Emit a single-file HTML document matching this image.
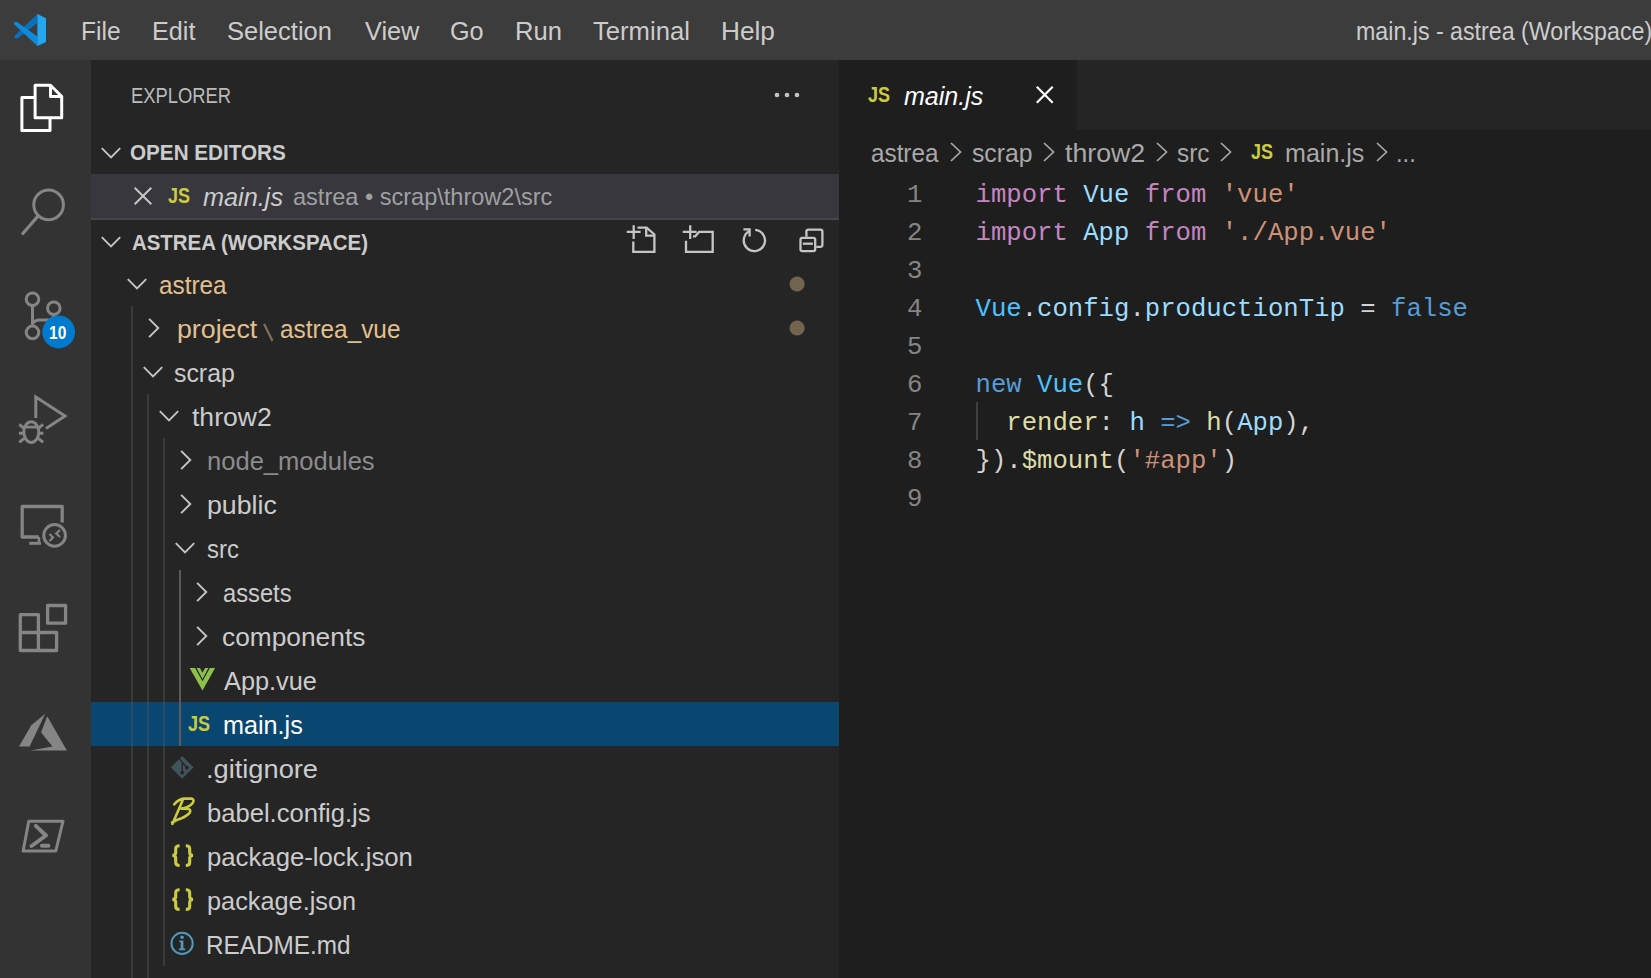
<!DOCTYPE html>
<html><head><meta charset="utf-8"><style>
html,body{margin:0;padding:0;width:1651px;height:978px;overflow:hidden;background:#1e1e1e;}
body>div{position:absolute;}
</style></head><body>
<div style="left:0px;top:0px;width:1651px;height:60px;background:#3c3c3c;"></div>
<div style="left:0px;top:60px;width:91px;height:918px;background:#333333;"></div>
<div style="left:91px;top:60px;width:748px;height:918px;background:#252526;"></div>
<div style="left:839px;top:60px;width:812px;height:918px;background:#1e1e1e;"></div>
<div style="left:839px;top:60px;width:812px;height:70px;background:#252526;"></div>
<div style="left:839px;top:60px;width:238px;height:70px;background:#1e1e1e;"></div>
<svg style="position:absolute;left:14px;top:14px;overflow:visible" width="32" height="32" viewBox="0 0 32 32">
<path d="M23.4 -0.1 L23.4 9.1 L3.8 24.2 Q2.2 25.2 1 24 L0 22.2 Z" fill="#0b6fba"/>
<path d="M0.1 10.3 Q-0.4 9 0.8 8 L3 7.9 L23.4 22.6 L23.4 32 Z" fill="#108bdc"/>
<path d="M23.4 -0.1 L32 4.2 L32 27.9 L23.4 32 Z" fill="#24a6f0"/>
</svg>
<div style="left:80.71px;top:18.19px;font-family:'Liberation Sans', sans-serif;font-size:26px;line-height:26px;color:#cccccc;font-weight:normal;font-style:normal;white-space:pre;transform:scaleX(0.9462);transform-origin:0 0;">File</div>
<div style="left:151.86px;top:18.19px;font-family:'Liberation Sans', sans-serif;font-size:26px;line-height:26px;color:#cccccc;font-weight:normal;font-style:normal;white-space:pre;transform:scaleX(0.9698);transform-origin:0 0;">Edit</div>
<div style="left:227.22px;top:18.19px;font-family:'Liberation Sans', sans-serif;font-size:26px;line-height:26px;color:#cccccc;font-weight:normal;font-style:normal;white-space:pre;transform:scaleX(0.9810);transform-origin:0 0;">Selection</div>
<div style="left:364.50px;top:18.19px;font-family:'Liberation Sans', sans-serif;font-size:26px;line-height:26px;color:#cccccc;font-weight:normal;font-style:normal;white-space:pre;transform:scaleX(0.9732);transform-origin:0 0;">View</div>
<div style="left:450.03px;top:18.19px;font-family:'Liberation Sans', sans-serif;font-size:26px;line-height:26px;color:#cccccc;font-weight:normal;font-style:normal;white-space:pre;transform:scaleX(0.9697);transform-origin:0 0;">Go</div>
<div style="left:514.73px;top:18.19px;font-family:'Liberation Sans', sans-serif;font-size:26px;line-height:26px;color:#cccccc;font-weight:normal;font-style:normal;white-space:pre;transform:scaleX(0.9841);transform-origin:0 0;">Run</div>
<div style="left:593.00px;top:18.19px;font-family:'Liberation Sans', sans-serif;font-size:26px;line-height:26px;color:#cccccc;font-weight:normal;font-style:normal;white-space:pre;transform:scaleX(0.9856);transform-origin:0 0;">Terminal</div>
<div style="left:720.98px;top:18.19px;font-family:'Liberation Sans', sans-serif;font-size:26px;line-height:26px;color:#cccccc;font-weight:normal;font-style:normal;white-space:pre;transform:scaleX(1.0078);transform-origin:0 0;">Help</div>
<div style="left:1356.11px;top:18.49px;font-family:'Liberation Sans', sans-serif;font-size:26px;line-height:26px;color:#cccccc;font-weight:normal;font-style:normal;white-space:pre;transform:scaleX(0.8924);transform-origin:0 0;">main.js - astrea (Workspace)</div>
<svg style="position:absolute;left:0px;top:60px;overflow:visible" width="91" height="96" viewBox="0 60 91 96">
<path d="M35.1 85.2 H50.5 L61.7 96.5 V117.8 H35.1 Z" fill="none" stroke="#fff" stroke-width="3" stroke-linejoin="round"/>
<path d="M50.5 85.2 V96.5 H61.7" fill="none" stroke="#fff" stroke-width="3" stroke-linejoin="round"/>
<path d="M35.1 97.5 H21.9 V130.5 H50 V117.8" fill="none" stroke="#fff" stroke-width="3" stroke-linejoin="round"/>
</svg>
<svg style="position:absolute;left:0px;top:156px;overflow:visible" width="91" height="96" viewBox="0 156 91 96">
<circle cx="48.6" cy="204.9" r="14.8" fill="none" stroke="#858585" stroke-width="3"/>
<path d="M38.4 215.6 L22 234.5" stroke="#858585" stroke-width="3.2" stroke-linecap="butt"/>
</svg>
<svg style="position:absolute;left:0px;top:252px;overflow:visible" width="91" height="110" viewBox="0 252 91 110">
<circle cx="32.5" cy="299.2" r="6.3" fill="none" stroke="#858585" stroke-width="3"/>
<circle cx="53.8" cy="308.2" r="6.3" fill="none" stroke="#858585" stroke-width="3"/>
<circle cx="32.5" cy="332.4" r="6.3" fill="none" stroke="#858585" stroke-width="3"/>
<path d="M32.5 305.5 V326" stroke="#858585" stroke-width="3"/>
<path d="M32.5 324 Q34 320 40 320 H48 Q53.8 320 53.8 314.5" fill="none" stroke="#858585" stroke-width="3"/>
<circle cx="58.7" cy="332" r="16.4" fill="#007acc"/>
</svg>
<div style="left:49.14px;top:323.66px;font-family:'Liberation Sans', sans-serif;font-size:18px;line-height:18px;color:#ffffff;font-weight:bold;font-style:normal;white-space:pre;transform:scaleX(0.8632);transform-origin:0 0;">10</div>
<svg style="position:absolute;left:0px;top:380px;overflow:visible" width="91" height="80" viewBox="0 380 91 80">
<path d="M35.8 418 V397 L65 416 L46 428.5" fill="none" stroke="#858585" stroke-width="3" stroke-linejoin="miter"/>
<ellipse cx="31.3" cy="432.1" rx="7.5" ry="10.3" fill="none" stroke="#858585" stroke-width="3"/>
<path d="M23 427.1 H39.6" stroke="#858585" stroke-width="2.8"/>
<path d="M19 433.3 H23.6 M39 433.3 H43.4 M19.3 424.3 L24 428.3 M43.1 424.3 L38.4 428.3 M19.3 442.4 L24 438.3 M43.1 442.4 L38.4 438.3" stroke="#858585" stroke-width="3"/>
</svg>
<svg style="position:absolute;left:0px;top:490px;overflow:visible" width="91" height="70" viewBox="0 490 91 70">
<path d="M38.8 537 H22.2 V506.5 H62.2 V522.5" fill="none" stroke="#858585" stroke-width="3.3" stroke-linejoin="round"/>
<path d="M29.2 543.3 H41" stroke="#858585" stroke-width="3"/>
<path d="M38.9 537 V543" stroke="#858585" stroke-width="2.5"/>
<circle cx="54.6" cy="535.4" r="10.8" fill="none" stroke="#858585" stroke-width="3"/>
<path d="M49.5 534 L53 537.5 L49.5 541 M60 530 L56.2 533.5 L60 537" fill="none" stroke="#858585" stroke-width="2.2"/>
</svg>
<svg style="position:absolute;left:0px;top:590px;overflow:visible" width="91" height="80" viewBox="0 590 91 80">
<rect x="47.6" y="605.5" width="18" height="17.7" fill="none" stroke="#858585" stroke-width="3.3" stroke-linejoin="round"/>
<path d="M20.3 614.6 H38.4 V632.5 H56.6 V650.5 H20.3 Z M20.3 632.5 H38.4 V650.5" fill="none" stroke="#858585" stroke-width="3.3" stroke-linejoin="round"/>
</svg>
<svg style="position:absolute;left:0px;top:700px;overflow:visible" width="91" height="60" viewBox="0 700 91 60">
<path d="M45.2 713.7 L31.3 725.2 L19 746.4 L29.6 746.4 Z" fill="#858585"/>
<path d="M47.2 716.2 L41.1 732.5 L52.5 746.4 L30.4 750.5 L66.9 750.5 Z" fill="#858585"/>
</svg>
<svg style="position:absolute;left:0px;top:810px;overflow:visible" width="91" height="50" viewBox="0 810 91 50">
<path d="M28.8 821.2 H63 L55.8 851 H23.1 Z" fill="none" stroke="#858585" stroke-width="3" stroke-linejoin="round"/>
<path d="M35.8 825.9 L46 835.5 L31.5 846" fill="none" stroke="#858585" stroke-width="4" stroke-linecap="round" stroke-linejoin="round"/>
<path d="M41.9 845.7 H48.4" stroke="#858585" stroke-width="4" stroke-linecap="round"/>
</svg>
<div style="left:131.46px;top:85.38px;font-family:'Liberation Sans', sans-serif;font-size:22px;line-height:22px;color:#bbbbbb;font-weight:normal;font-style:normal;white-space:pre;transform:scaleX(0.8356);transform-origin:0 0;">EXPLORER</div>
<svg style="position:absolute;left:770px;top:88px;overflow:visible" width="34" height="14" viewBox="0 0 34 14"><circle cx="7" cy="7" r="2.3" fill="#c5c5c5"/><circle cx="17" cy="7" r="2.3" fill="#c5c5c5"/><circle cx="27" cy="7" r="2.3" fill="#c5c5c5"/></svg>
<svg style="position:absolute;left:99px;top:144.6px;overflow:visible" width="24" height="16" viewBox="0 0 24 16"><path d="M2.8 3.1 L12 12.3 L21.2 3.1" fill="none" stroke="#c5c5c5" stroke-width="1.9"/></svg>
<div style="left:130.26px;top:142.28px;font-family:'Liberation Sans', sans-serif;font-size:22px;line-height:22px;color:#cccccc;font-weight:bold;font-style:normal;white-space:pre;transform:scaleX(0.9394);transform-origin:0 0;">OPEN EDITORS</div>
<div style="left:91px;top:174px;width:748px;height:44px;background:#37373d;"></div>
<div style="left:91px;top:218px;width:748px;height:2px;background:#464647;"></div>
<svg style="position:absolute;left:133.9px;top:187.4px;overflow:visible" width="18" height="18" viewBox="0 0 18 18"><path d="M0.7 0.7 L17.3 17.3 M17.3 0.7 L0.7 17.3" stroke="#c5c5c5" stroke-width="2"/></svg>
<div style="left:167.50px;top:184.95px;font-family:'Liberation Sans', sans-serif;font-size:22.5px;line-height:22.5px;color:#cbcb41;font-weight:bold;font-style:normal;white-space:pre;transform:scaleX(0.8000);transform-origin:0 0;">JS</div>
<div style="left:203.20px;top:184.39px;font-family:'Liberation Sans', sans-serif;font-size:26px;line-height:26px;color:#cccccc;font-weight:normal;font-style:italic;white-space:pre;transform:scaleX(0.9720);transform-origin:0 0;">main.js</div>
<div style="left:293.49px;top:186.39px;font-family:'Liberation Sans', sans-serif;font-size:23.4px;line-height:23.4px;color:#a0a0a2;font-weight:normal;font-style:normal;white-space:pre;transform:scaleX(1.0059);transform-origin:0 0;">astrea • scrap\throw2\src</div>
<svg style="position:absolute;left:99px;top:234.1px;overflow:visible" width="24" height="16" viewBox="0 0 24 16"><path d="M2.8 3.1 L12 12.3 L21.2 3.1" fill="none" stroke="#c5c5c5" stroke-width="1.9"/></svg>
<div style="left:131.50px;top:232.28px;font-family:'Liberation Sans', sans-serif;font-size:22px;line-height:22px;color:#cccccc;font-weight:bold;font-style:normal;white-space:pre;transform:scaleX(0.9283);transform-origin:0 0;">ASTREA (WORKSPACE)</div>
<svg style="position:absolute;left:600px;top:210px;overflow:visible" width="240" height="50" viewBox="600 210 240 50">
<path d="M626.8 231.9 H640.6 M633.7 225.3 V239.1" stroke="#c5c5c5" stroke-width="2.3"/>
<path d="M633.3 241.4 V251.8 H654.4 V234.5 L646.6 227.6 H637.5" fill="none" stroke="#c5c5c5" stroke-width="2.3"/>
<path d="M646.2 227.6 V235.6 H654.4" fill="none" stroke="#c5c5c5" stroke-width="2.3"/>
<path d="M682.8 231.9 H696.6 M690.2 225.3 V239.1" stroke="#c5c5c5" stroke-width="2.3"/>
<path d="M686 240.7 V251.8 H712.7 V231.9 H699 L695.2 236.4 H693" fill="none" stroke="#c5c5c5" stroke-width="2.3"/>
<path d="M749.6 231 A10.6 10.6 0 1 0 755.2 229.9" fill="none" stroke="#c5c5c5" stroke-width="2.3"/>
<path d="M743.4 229.3 H749.6 V236.5" fill="none" stroke="#c5c5c5" stroke-width="2.3"/>
<path d="M806.4 236.8 V231.6 Q806.4 229.6 808.4 229.6 H820.4 Q822.4 229.6 822.4 231.6 V244.8 Q822.4 246.8 820.4 246.8 H816.3" fill="none" stroke="#c5c5c5" stroke-width="2.3"/>
<rect x="800.5" y="237.9" width="14.7" height="13.2" rx="1.8" fill="none" stroke="#c5c5c5" stroke-width="2.3"/>
<path d="M802.8 243.7 H813" stroke="#c5c5c5" stroke-width="2.3"/>
</svg>
<div style="left:91px;top:702px;width:748px;height:44px;background:#094771;"></div>
<div style="left:131px;top:306px;width:2px;height:672px;background:rgba(88,88,88,0.4);"></div>
<div style="left:147px;top:394px;width:2px;height:584px;background:rgba(88,88,88,0.4);"></div>
<div style="left:163px;top:438px;width:2px;height:528px;background:rgba(88,88,88,0.4);"></div>
<div style="left:179px;top:570px;width:2px;height:176px;background:#5e5a57;"></div>
<svg style="position:absolute;left:125.19999999999999px;top:276.4px;overflow:visible" width="24" height="16" viewBox="0 0 24 16"><path d="M2.8 3.1 L12 12.3 L21.2 3.1" fill="none" stroke="#c5c5c5" stroke-width="1.9"/></svg>
<div style="left:158.77px;top:271.79px;font-family:'Liberation Sans', sans-serif;font-size:26px;line-height:26px;color:#e2c08d;font-weight:normal;font-style:normal;white-space:pre;transform:scaleX(0.9347);transform-origin:0 0;">astrea</div>
<svg style="position:absolute;left:146.0px;top:316.0px;overflow:visible" width="16" height="24" viewBox="0 0 16 24"><path d="M3.1 2.8 L12.3 12 L3.1 21.2" fill="none" stroke="#c5c5c5" stroke-width="1.9"/></svg>
<div style="left:176.97px;top:315.79px;font-family:'Liberation Sans', sans-serif;font-size:26px;line-height:26px;color:#e2c08d;font-weight:normal;font-style:normal;white-space:pre;transform:scaleX(1.0286);transform-origin:0 0;">project</div>
<svg style="position:absolute;left:255px;top:320px;overflow:visible" width="30" height="25" viewBox="0 0 30 25"><path d="M9.1 3.9 L17.5 21" stroke="#7c6e58" stroke-width="2.3"/></svg>
<div style="left:279.56px;top:315.79px;font-family:'Liberation Sans', sans-serif;font-size:26px;line-height:26px;color:#e2c08d;font-weight:normal;font-style:normal;white-space:pre;transform:scaleX(0.9362);transform-origin:0 0;">astrea_vue</div>
<svg style="position:absolute;left:141.2px;top:364.4px;overflow:visible" width="24" height="16" viewBox="0 0 24 16"><path d="M2.8 3.1 L12 12.3 L21.2 3.1" fill="none" stroke="#c5c5c5" stroke-width="1.9"/></svg>
<div style="left:174.44px;top:359.79px;font-family:'Liberation Sans', sans-serif;font-size:26px;line-height:26px;color:#cccccc;font-weight:normal;font-style:normal;white-space:pre;transform:scaleX(0.9565);transform-origin:0 0;">scrap</div>
<svg style="position:absolute;left:157.2px;top:408.4px;overflow:visible" width="24" height="16" viewBox="0 0 24 16"><path d="M2.8 3.1 L12 12.3 L21.2 3.1" fill="none" stroke="#c5c5c5" stroke-width="1.9"/></svg>
<div style="left:191.70px;top:403.79px;font-family:'Liberation Sans', sans-serif;font-size:26px;line-height:26px;color:#cccccc;font-weight:normal;font-style:normal;white-space:pre;transform:scaleX(1.0208);transform-origin:0 0;">throw2</div>
<svg style="position:absolute;left:178.0px;top:448.0px;overflow:visible" width="16" height="24" viewBox="0 0 16 24"><path d="M3.1 2.8 L12.3 12 L3.1 21.2" fill="none" stroke="#c5c5c5" stroke-width="1.9"/></svg>
<div style="left:207.02px;top:447.79px;font-family:'Liberation Sans', sans-serif;font-size:26px;line-height:26px;color:#8c8c8c;font-weight:normal;font-style:normal;white-space:pre;transform:scaleX(0.9828);transform-origin:0 0;">node_modules</div>
<svg style="position:absolute;left:178.0px;top:492.0px;overflow:visible" width="16" height="24" viewBox="0 0 16 24"><path d="M3.1 2.8 L12.3 12 L3.1 21.2" fill="none" stroke="#c5c5c5" stroke-width="1.9"/></svg>
<div style="left:206.97px;top:491.79px;font-family:'Liberation Sans', sans-serif;font-size:26px;line-height:26px;color:#cccccc;font-weight:normal;font-style:normal;white-space:pre;transform:scaleX(1.0269);transform-origin:0 0;">public</div>
<svg style="position:absolute;left:173.2px;top:540.4px;overflow:visible" width="24" height="16" viewBox="0 0 24 16"><path d="M2.8 3.1 L12 12.3 L21.2 3.1" fill="none" stroke="#c5c5c5" stroke-width="1.9"/></svg>
<div style="left:207.08px;top:535.79px;font-family:'Liberation Sans', sans-serif;font-size:26px;line-height:26px;color:#cccccc;font-weight:normal;font-style:normal;white-space:pre;transform:scaleX(0.9182);transform-origin:0 0;">src</div>
<svg style="position:absolute;left:194.0px;top:580.0px;overflow:visible" width="16" height="24" viewBox="0 0 16 24"><path d="M3.1 2.8 L12.3 12 L3.1 21.2" fill="none" stroke="#c5c5c5" stroke-width="1.9"/></svg>
<div style="left:222.59px;top:579.79px;font-family:'Liberation Sans', sans-serif;font-size:26px;line-height:26px;color:#cccccc;font-weight:normal;font-style:normal;white-space:pre;transform:scaleX(0.9122);transform-origin:0 0;">assets</div>
<svg style="position:absolute;left:194.0px;top:624.0px;overflow:visible" width="16" height="24" viewBox="0 0 16 24"><path d="M3.1 2.8 L12.3 12 L3.1 21.2" fill="none" stroke="#c5c5c5" stroke-width="1.9"/></svg>
<div style="left:222.49px;top:623.79px;font-family:'Liberation Sans', sans-serif;font-size:26px;line-height:26px;color:#cccccc;font-weight:normal;font-style:normal;white-space:pre;transform:scaleX(1.0121);transform-origin:0 0;">components</div>
<div style="left:223.50px;top:667.79px;font-family:'Liberation Sans', sans-serif;font-size:26px;line-height:26px;color:#cccccc;font-weight:normal;font-style:normal;white-space:pre;transform:scaleX(0.9737);transform-origin:0 0;">App.vue</div>
<div style="left:222.53px;top:711.79px;font-family:'Liberation Sans', sans-serif;font-size:26px;line-height:26px;color:#ffffff;font-weight:normal;font-style:normal;white-space:pre;transform:scaleX(0.9691);transform-origin:0 0;">main.js</div>
<div style="left:205.91px;top:755.79px;font-family:'Liberation Sans', sans-serif;font-size:26px;line-height:26px;color:#cccccc;font-weight:normal;font-style:normal;white-space:pre;transform:scaleX(1.0471);transform-origin:0 0;">.gitignore</div>
<div style="left:207.02px;top:799.79px;font-family:'Liberation Sans', sans-serif;font-size:26px;line-height:26px;color:#cccccc;font-weight:normal;font-style:normal;white-space:pre;transform:scaleX(0.9842);transform-origin:0 0;">babel.config.js</div>
<div style="left:207.01px;top:843.79px;font-family:'Liberation Sans', sans-serif;font-size:26px;line-height:26px;color:#cccccc;font-weight:normal;font-style:normal;white-space:pre;transform:scaleX(0.9893);transform-origin:0 0;">package-lock.json</div>
<div style="left:207.03px;top:887.79px;font-family:'Liberation Sans', sans-serif;font-size:26px;line-height:26px;color:#cccccc;font-weight:normal;font-style:normal;white-space:pre;transform:scaleX(0.9728);transform-origin:0 0;">package.json</div>
<div style="left:206.13px;top:931.79px;font-family:'Liberation Sans', sans-serif;font-size:26px;line-height:26px;color:#cccccc;font-weight:normal;font-style:normal;white-space:pre;transform:scaleX(0.9358);transform-origin:0 0;">README.md</div>
<svg style="position:absolute;left:787px;top:273.6px;overflow:visible" width="20" height="20" viewBox="0 0 20 20"><circle cx="10.1" cy="10" r="7.6" fill="#73644f"/></svg>
<svg style="position:absolute;left:787px;top:318.1px;overflow:visible" width="20" height="20" viewBox="0 0 20 20"><circle cx="10.1" cy="10" r="7.6" fill="#73644f"/></svg>
<svg style="position:absolute;left:1036.2px;top:86.3px;overflow:visible" width="17.5" height="17.5" viewBox="0 0 17.5 17.5"><path d="M0.8 0.8 L16.7 16.7 M16.7 0.8 L0.8 16.7" stroke="#ffffff" stroke-width="2.2"/></svg>
<div style="left:867.50px;top:83.65px;font-family:'Liberation Sans', sans-serif;font-size:22.5px;line-height:22.5px;color:#cbcb41;font-weight:bold;font-style:normal;white-space:pre;transform:scaleX(0.8000);transform-origin:0 0;">JS</div>
<div style="left:903.60px;top:83.39px;font-family:'Liberation Sans', sans-serif;font-size:26px;line-height:26px;color:#ffffff;font-weight:normal;font-style:italic;white-space:pre;transform:scaleX(0.9634);transform-origin:0 0;">main.js</div>
<div style="left:870.87px;top:139.89px;font-family:'Liberation Sans', sans-serif;font-size:26px;line-height:26px;color:#a9a9a9;font-weight:normal;font-style:normal;white-space:pre;transform:scaleX(0.9333);transform-origin:0 0;">astrea</div>
<svg style="position:absolute;left:950.4px;top:142px;overflow:visible" width="12" height="20" viewBox="0 0 12 20"><path d="M1 1 L10.5 10 L1 19" fill="none" stroke="#a9a9a9" stroke-width="1.7"/></svg>
<div style="left:971.75px;top:139.89px;font-family:'Liberation Sans', sans-serif;font-size:26px;line-height:26px;color:#a9a9a9;font-weight:normal;font-style:normal;white-space:pre;transform:scaleX(0.9516);transform-origin:0 0;">scrap</div>
<svg style="position:absolute;left:1043px;top:142px;overflow:visible" width="12" height="20" viewBox="0 0 12 20"><path d="M1 1 L10.5 10 L1 19" fill="none" stroke="#a9a9a9" stroke-width="1.7"/></svg>
<div style="left:1065.30px;top:139.89px;font-family:'Liberation Sans', sans-serif;font-size:26px;line-height:26px;color:#a9a9a9;font-weight:normal;font-style:normal;white-space:pre;transform:scaleX(1.0273);transform-origin:0 0;">throw2</div>
<svg style="position:absolute;left:1156px;top:142px;overflow:visible" width="12" height="20" viewBox="0 0 12 20"><path d="M1 1 L10.5 10 L1 19" fill="none" stroke="#a9a9a9" stroke-width="1.7"/></svg>
<div style="left:1177.27px;top:139.89px;font-family:'Liberation Sans', sans-serif;font-size:26px;line-height:26px;color:#a9a9a9;font-weight:normal;font-style:normal;white-space:pre;transform:scaleX(0.9333);transform-origin:0 0;">src</div>
<svg style="position:absolute;left:1220.4px;top:142px;overflow:visible" width="12" height="20" viewBox="0 0 12 20"><path d="M1 1 L10.5 10 L1 19" fill="none" stroke="#a9a9a9" stroke-width="1.7"/></svg>
<div style="left:1250.90px;top:140.85px;font-family:'Liberation Sans', sans-serif;font-size:22.5px;line-height:22.5px;color:#cbcb41;font-weight:bold;font-style:normal;white-space:pre;transform:scaleX(0.8000);transform-origin:0 0;">JS</div>
<div style="left:1285.34px;top:139.89px;font-family:'Liberation Sans', sans-serif;font-size:26px;line-height:26px;color:#a9a9a9;font-weight:normal;font-style:normal;white-space:pre;transform:scaleX(0.9642);transform-origin:0 0;">main.js</div>
<svg style="position:absolute;left:1375.7px;top:142px;overflow:visible" width="12" height="20" viewBox="0 0 12 20"><path d="M1 1 L10.5 10 L1 19" fill="none" stroke="#a9a9a9" stroke-width="1.7"/></svg>
<div style="left:1396.18px;top:139.89px;font-family:'Liberation Sans', sans-serif;font-size:26px;line-height:26px;color:#a9a9a9;font-weight:normal;font-style:normal;white-space:pre;transform:scaleX(0.9111);transform-origin:0 0;">...</div>
<svg style="position:absolute;left:185px;top:660px;overflow:visible" width="36" height="36" viewBox="0 0 36 36">
<path d="M4.65 8.05 H30.1 L17.5 30.4 Z" fill="#8dc149"/>
<path d="M10.1 8.05 H11.6 L17.5 19 L23.4 8.05 H24.9 L17.5 21.3 Z" fill="#252526"/>
<path d="M14.9 8.05 H20.1 L17.5 12.8 Z" fill="#252526"/>
</svg>
<div style="left:188.30px;top:712.95px;font-family:'Liberation Sans', sans-serif;font-size:22.5px;line-height:22.5px;color:#cbcb41;font-weight:bold;font-style:normal;white-space:pre;transform:scaleX(0.8000);transform-origin:0 0;">JS</div>
<svg style="position:absolute;left:165px;top:750px;overflow:visible" width="36" height="36" viewBox="0 0 36 36">
<path d="M17.2 7.4 L27.3 17.4 L17.2 27.4 L7.1 17.4 Z" fill="#41535b" stroke="#41535b" stroke-width="2" stroke-linejoin="round"/>
<path d="M13.6 7.6 L17.2 12.2 V22.6 M17.2 12.2 L21.9 17.6" fill="none" stroke="#252526" stroke-width="1.3"/>
<circle cx="17.2" cy="22.6" r="1.9" fill="#252526"/><circle cx="21.9" cy="17.6" r="1.9" fill="#252526"/>
</svg>
<svg style="position:absolute;left:165px;top:792px;overflow:visible" width="36" height="36" viewBox="0 0 36 36">
<path d="M9.2 12.3 Q14 7 19 6.6 L26.6 6.6 Q29.5 7.5 28 10.5 Q26 14.5 17.2 16.4 M16.4 16.8 L23.5 17 Q26.5 18 24.5 21 Q20 25.5 12.3 27.8 L7 30.5 M17.6 8.5 L7.4 32" fill="none" stroke="#cbcb41" stroke-width="2.6" stroke-linejoin="round" stroke-linecap="round"/>
</svg>
<svg style="position:absolute;left:165px;top:838px;overflow:visible" width="36" height="36" viewBox="0 0 36 36">
<path d="M14.6 7.7 Q10.7 7.7 10.7 10.7 V14.6 Q10.7 17.5 7.3 17.5 Q10.7 17.5 10.7 20.4 V24.5 Q10.7 27.5 14.6 27.5" fill="none" stroke="#cbcb41" stroke-width="3.1"/>
<path d="M20.8 7.7 Q24.7 7.7 24.7 10.7 V14.6 Q24.7 17.5 28.1 17.5 Q24.7 17.5 24.7 20.4 V24.5 Q24.7 27.5 20.8 27.5" fill="none" stroke="#cbcb41" stroke-width="3.1"/>
</svg>
<svg style="position:absolute;left:165px;top:882px;overflow:visible" width="36" height="36" viewBox="0 0 36 36">
<path d="M14.6 7.7 Q10.7 7.7 10.7 10.7 V14.6 Q10.7 17.5 7.3 17.5 Q10.7 17.5 10.7 20.4 V24.5 Q10.7 27.5 14.6 27.5" fill="none" stroke="#cbcb41" stroke-width="3.1"/>
<path d="M20.8 7.7 Q24.7 7.7 24.7 10.7 V14.6 Q24.7 17.5 28.1 17.5 Q24.7 17.5 24.7 20.4 V24.5 Q24.7 27.5 20.8 27.5" fill="none" stroke="#cbcb41" stroke-width="3.1"/>
</svg>
<svg style="position:absolute;left:165px;top:926px;overflow:visible" width="36" height="36" viewBox="0 0 36 36">
<circle cx="17.1" cy="17.4" r="10.6" fill="none" stroke="#519aba" stroke-width="2"/>
<circle cx="17.1" cy="11.3" r="1.8" fill="#519aba"/>
<path d="M14.3 14.6 H18.4 V22.6 H20.2 V24.3 H13.9 V22.6 H15.7 V16.2 H14.3 Z" fill="#519aba"/>
</svg>
<div style="left:907.11px;top:182.74px;font-family:'Liberation Mono', monospace;font-size:25.650000000000002px;line-height:25.650000000000002px;color:#858585;font-weight:normal;font-style:normal;white-space:pre;">1</div>
<div style="left:975.50px;top:182.74px;font-family:'Liberation Mono', monospace;font-size:25.650000000000002px;line-height:25.650000000000002px;color:#c586c0;font-weight:normal;font-style:normal;white-space:pre;">import</div>
<div style="left:1083.23px;top:182.74px;font-family:'Liberation Mono', monospace;font-size:25.650000000000002px;line-height:25.650000000000002px;color:#9cdcfe;font-weight:normal;font-style:normal;white-space:pre;">Vue</div>
<div style="left:1144.79px;top:182.74px;font-family:'Liberation Mono', monospace;font-size:25.650000000000002px;line-height:25.650000000000002px;color:#c586c0;font-weight:normal;font-style:normal;white-space:pre;">from</div>
<div style="left:1221.74px;top:182.74px;font-family:'Liberation Mono', monospace;font-size:25.650000000000002px;line-height:25.650000000000002px;color:#ce9178;font-weight:normal;font-style:normal;white-space:pre;">'vue'</div>
<div style="left:907.11px;top:220.74px;font-family:'Liberation Mono', monospace;font-size:25.650000000000002px;line-height:25.650000000000002px;color:#858585;font-weight:normal;font-style:normal;white-space:pre;">2</div>
<div style="left:975.50px;top:220.74px;font-family:'Liberation Mono', monospace;font-size:25.650000000000002px;line-height:25.650000000000002px;color:#c586c0;font-weight:normal;font-style:normal;white-space:pre;">import</div>
<div style="left:1083.23px;top:220.74px;font-family:'Liberation Mono', monospace;font-size:25.650000000000002px;line-height:25.650000000000002px;color:#9cdcfe;font-weight:normal;font-style:normal;white-space:pre;">App</div>
<div style="left:1144.79px;top:220.74px;font-family:'Liberation Mono', monospace;font-size:25.650000000000002px;line-height:25.650000000000002px;color:#c586c0;font-weight:normal;font-style:normal;white-space:pre;">from</div>
<div style="left:1221.74px;top:220.74px;font-family:'Liberation Mono', monospace;font-size:25.650000000000002px;line-height:25.650000000000002px;color:#ce9178;font-weight:normal;font-style:normal;white-space:pre;">'./App.vue'</div>
<div style="left:907.11px;top:258.74px;font-family:'Liberation Mono', monospace;font-size:25.650000000000002px;line-height:25.650000000000002px;color:#858585;font-weight:normal;font-style:normal;white-space:pre;">3</div>
<div style="left:907.11px;top:296.74px;font-family:'Liberation Mono', monospace;font-size:25.650000000000002px;line-height:25.650000000000002px;color:#858585;font-weight:normal;font-style:normal;white-space:pre;">4</div>
<div style="left:975.50px;top:296.74px;font-family:'Liberation Mono', monospace;font-size:25.650000000000002px;line-height:25.650000000000002px;color:#4fc1ff;font-weight:normal;font-style:normal;white-space:pre;">Vue</div>
<div style="left:1021.67px;top:296.74px;font-family:'Liberation Mono', monospace;font-size:25.650000000000002px;line-height:25.650000000000002px;color:#d4d4d4;font-weight:normal;font-style:normal;white-space:pre;">.</div>
<div style="left:1037.06px;top:296.74px;font-family:'Liberation Mono', monospace;font-size:25.650000000000002px;line-height:25.650000000000002px;color:#9cdcfe;font-weight:normal;font-style:normal;white-space:pre;">config</div>
<div style="left:1129.40px;top:296.74px;font-family:'Liberation Mono', monospace;font-size:25.650000000000002px;line-height:25.650000000000002px;color:#d4d4d4;font-weight:normal;font-style:normal;white-space:pre;">.</div>
<div style="left:1144.79px;top:296.74px;font-family:'Liberation Mono', monospace;font-size:25.650000000000002px;line-height:25.650000000000002px;color:#9cdcfe;font-weight:normal;font-style:normal;white-space:pre;">productionTip</div>
<div style="left:1344.86px;top:296.74px;font-family:'Liberation Mono', monospace;font-size:25.650000000000002px;line-height:25.650000000000002px;color:#d4d4d4;font-weight:normal;font-style:normal;white-space:pre;"> = </div>
<div style="left:1391.03px;top:296.74px;font-family:'Liberation Mono', monospace;font-size:25.650000000000002px;line-height:25.650000000000002px;color:#569cd6;font-weight:normal;font-style:normal;white-space:pre;">false</div>
<div style="left:907.11px;top:334.74px;font-family:'Liberation Mono', monospace;font-size:25.650000000000002px;line-height:25.650000000000002px;color:#858585;font-weight:normal;font-style:normal;white-space:pre;">5</div>
<div style="left:907.11px;top:372.74px;font-family:'Liberation Mono', monospace;font-size:25.650000000000002px;line-height:25.650000000000002px;color:#858585;font-weight:normal;font-style:normal;white-space:pre;">6</div>
<div style="left:975.50px;top:372.74px;font-family:'Liberation Mono', monospace;font-size:25.650000000000002px;line-height:25.650000000000002px;color:#569cd6;font-weight:normal;font-style:normal;white-space:pre;">new</div>
<div style="left:1037.06px;top:372.74px;font-family:'Liberation Mono', monospace;font-size:25.650000000000002px;line-height:25.650000000000002px;color:#4fc1ff;font-weight:normal;font-style:normal;white-space:pre;">Vue</div>
<div style="left:1083.23px;top:372.74px;font-family:'Liberation Mono', monospace;font-size:25.650000000000002px;line-height:25.650000000000002px;color:#d4d4d4;font-weight:normal;font-style:normal;white-space:pre;">({</div>
<div style="left:907.11px;top:410.74px;font-family:'Liberation Mono', monospace;font-size:25.650000000000002px;line-height:25.650000000000002px;color:#858585;font-weight:normal;font-style:normal;white-space:pre;">7</div>
<div style="left:1006.28px;top:410.74px;font-family:'Liberation Mono', monospace;font-size:25.650000000000002px;line-height:25.650000000000002px;color:#dcdcaa;font-weight:normal;font-style:normal;white-space:pre;">render</div>
<div style="left:1098.62px;top:410.74px;font-family:'Liberation Mono', monospace;font-size:25.650000000000002px;line-height:25.650000000000002px;color:#d4d4d4;font-weight:normal;font-style:normal;white-space:pre;">: </div>
<div style="left:1129.40px;top:410.74px;font-family:'Liberation Mono', monospace;font-size:25.650000000000002px;line-height:25.650000000000002px;color:#9cdcfe;font-weight:normal;font-style:normal;white-space:pre;">h</div>
<div style="left:1160.18px;top:410.74px;font-family:'Liberation Mono', monospace;font-size:25.650000000000002px;line-height:25.650000000000002px;color:#569cd6;font-weight:normal;font-style:normal;white-space:pre;">=></div>
<div style="left:1206.35px;top:410.74px;font-family:'Liberation Mono', monospace;font-size:25.650000000000002px;line-height:25.650000000000002px;color:#dcdcaa;font-weight:normal;font-style:normal;white-space:pre;">h</div>
<div style="left:1221.74px;top:410.74px;font-family:'Liberation Mono', monospace;font-size:25.650000000000002px;line-height:25.650000000000002px;color:#d4d4d4;font-weight:normal;font-style:normal;white-space:pre;">(</div>
<div style="left:1237.13px;top:410.74px;font-family:'Liberation Mono', monospace;font-size:25.650000000000002px;line-height:25.650000000000002px;color:#9cdcfe;font-weight:normal;font-style:normal;white-space:pre;">App</div>
<div style="left:1283.30px;top:410.74px;font-family:'Liberation Mono', monospace;font-size:25.650000000000002px;line-height:25.650000000000002px;color:#d4d4d4;font-weight:normal;font-style:normal;white-space:pre;">),</div>
<div style="left:907.11px;top:448.74px;font-family:'Liberation Mono', monospace;font-size:25.650000000000002px;line-height:25.650000000000002px;color:#858585;font-weight:normal;font-style:normal;white-space:pre;">8</div>
<div style="left:975.50px;top:448.74px;font-family:'Liberation Mono', monospace;font-size:25.650000000000002px;line-height:25.650000000000002px;color:#d4d4d4;font-weight:normal;font-style:normal;white-space:pre;">})</div>
<div style="left:1006.28px;top:448.74px;font-family:'Liberation Mono', monospace;font-size:25.650000000000002px;line-height:25.650000000000002px;color:#d4d4d4;font-weight:normal;font-style:normal;white-space:pre;">.</div>
<div style="left:1021.67px;top:448.74px;font-family:'Liberation Mono', monospace;font-size:25.650000000000002px;line-height:25.650000000000002px;color:#dcdcaa;font-weight:normal;font-style:normal;white-space:pre;">$mount</div>
<div style="left:1114.01px;top:448.74px;font-family:'Liberation Mono', monospace;font-size:25.650000000000002px;line-height:25.650000000000002px;color:#d4d4d4;font-weight:normal;font-style:normal;white-space:pre;">(</div>
<div style="left:1129.40px;top:448.74px;font-family:'Liberation Mono', monospace;font-size:25.650000000000002px;line-height:25.650000000000002px;color:#ce9178;font-weight:normal;font-style:normal;white-space:pre;">'#app'</div>
<div style="left:1221.74px;top:448.74px;font-family:'Liberation Mono', monospace;font-size:25.650000000000002px;line-height:25.650000000000002px;color:#d4d4d4;font-weight:normal;font-style:normal;white-space:pre;">)</div>
<div style="left:907.11px;top:486.74px;font-family:'Liberation Mono', monospace;font-size:25.650000000000002px;line-height:25.650000000000002px;color:#858585;font-weight:normal;font-style:normal;white-space:pre;">9</div>
<div style="left:976px;top:402px;width:2px;height:38px;background:#404040;"></div>
</body></html>
